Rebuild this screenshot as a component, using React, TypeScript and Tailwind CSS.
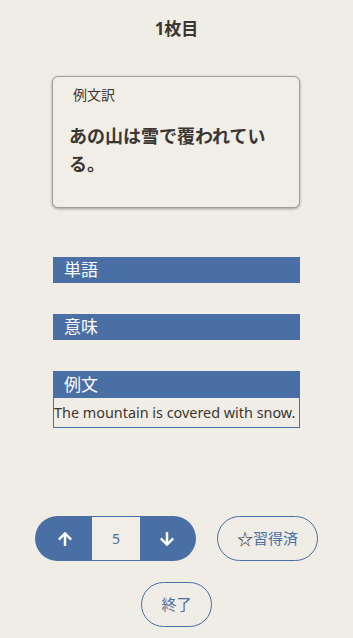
import React from "react";
import { FaArrowUp, FaArrowDown } from "react-icons/fa";

export default function App() {
  return (
    <div
      className="w-[353px] h-[638px] bg-[#f0ede6] text-[#3b3631] overflow-hidden flex flex-col"
      style={{ fontFamily: '"Noto Sans", "Noto Sans CJK JP", sans-serif' }}
    >
      <div className="pt-[18px] text-center text-[17px] leading-[22px] font-bold">1枚目</div>

      <div className="mt-[36px] ml-[52px] w-[248px] h-[132px] rounded-[6px] border border-[#a19d97] shadow-[0_1px_3px_rgba(0,0,0,0.35)] bg-[#f1eee8] pt-[9px]">
        <div className="pl-[20px] text-[14px] leading-[18px]">例文訳</div>
        <div className="mt-[18px] pl-[16px] pr-[12px] text-[18px] leading-[28px] font-bold">
          あの山は雪で覆われている。
        </div>
      </div>

      <div className="mt-[49px] ml-[53px] w-[247px] flex flex-col">
        <div className="h-[26px] bg-[#4a6fa5] text-white text-[17px] leading-[26px] pl-[11px]">単語</div>
        <div className="mt-[31px] h-[26px] bg-[#4a6fa5] text-white text-[17px] leading-[26px] pl-[11px]">意味</div>
        <div className="mt-[31px] border border-[#4a6fa5]">
          <div className="h-[26px] bg-[#4a6fa5] text-white text-[17px] leading-[26px] pl-[10px]">例文</div>
          <div className="h-[29px] text-[14.4px] leading-[29px] whitespace-nowrap text-[#3b3631]">
            The mountain is covered with snow.
          </div>
        </div>
      </div>

      <div className="mt-[88px] flex items-center pl-[35px] gap-[21px]">
        <div className="flex h-[45px] w-[161px] rounded-full overflow-hidden bg-[#4a6fa5]">
          <div className="w-[57px] flex items-center justify-center pl-[2px] text-white">
            <FaArrowUp size={16} />
          </div>
          <div className="w-[48px] my-[1px] bg-[#f1eee8] flex items-center justify-center text-[#4a6fa5] text-[14px]">5</div>
          <div className="flex-1 flex items-center justify-center pr-[2px] text-white">
            <FaArrowDown size={16} />
          </div>
        </div>
        <div className="h-[45px] w-[101px] rounded-full border border-[#4a6fa5] flex items-center justify-center text-[15px] text-[#4a6fa5]">
          <span className="text-[#3b3631] text-[16px] leading-none">☆</span>
          <span>習得済</span>
        </div>
      </div>

      <div className="mt-[21px] flex justify-center">
        <div className="h-[45px] w-[71px] rounded-full border border-[#4a6fa5] flex items-center justify-center text-[15px] text-[#4a6fa5]">
          終了
        </div>
      </div>
    </div>
  );
}
